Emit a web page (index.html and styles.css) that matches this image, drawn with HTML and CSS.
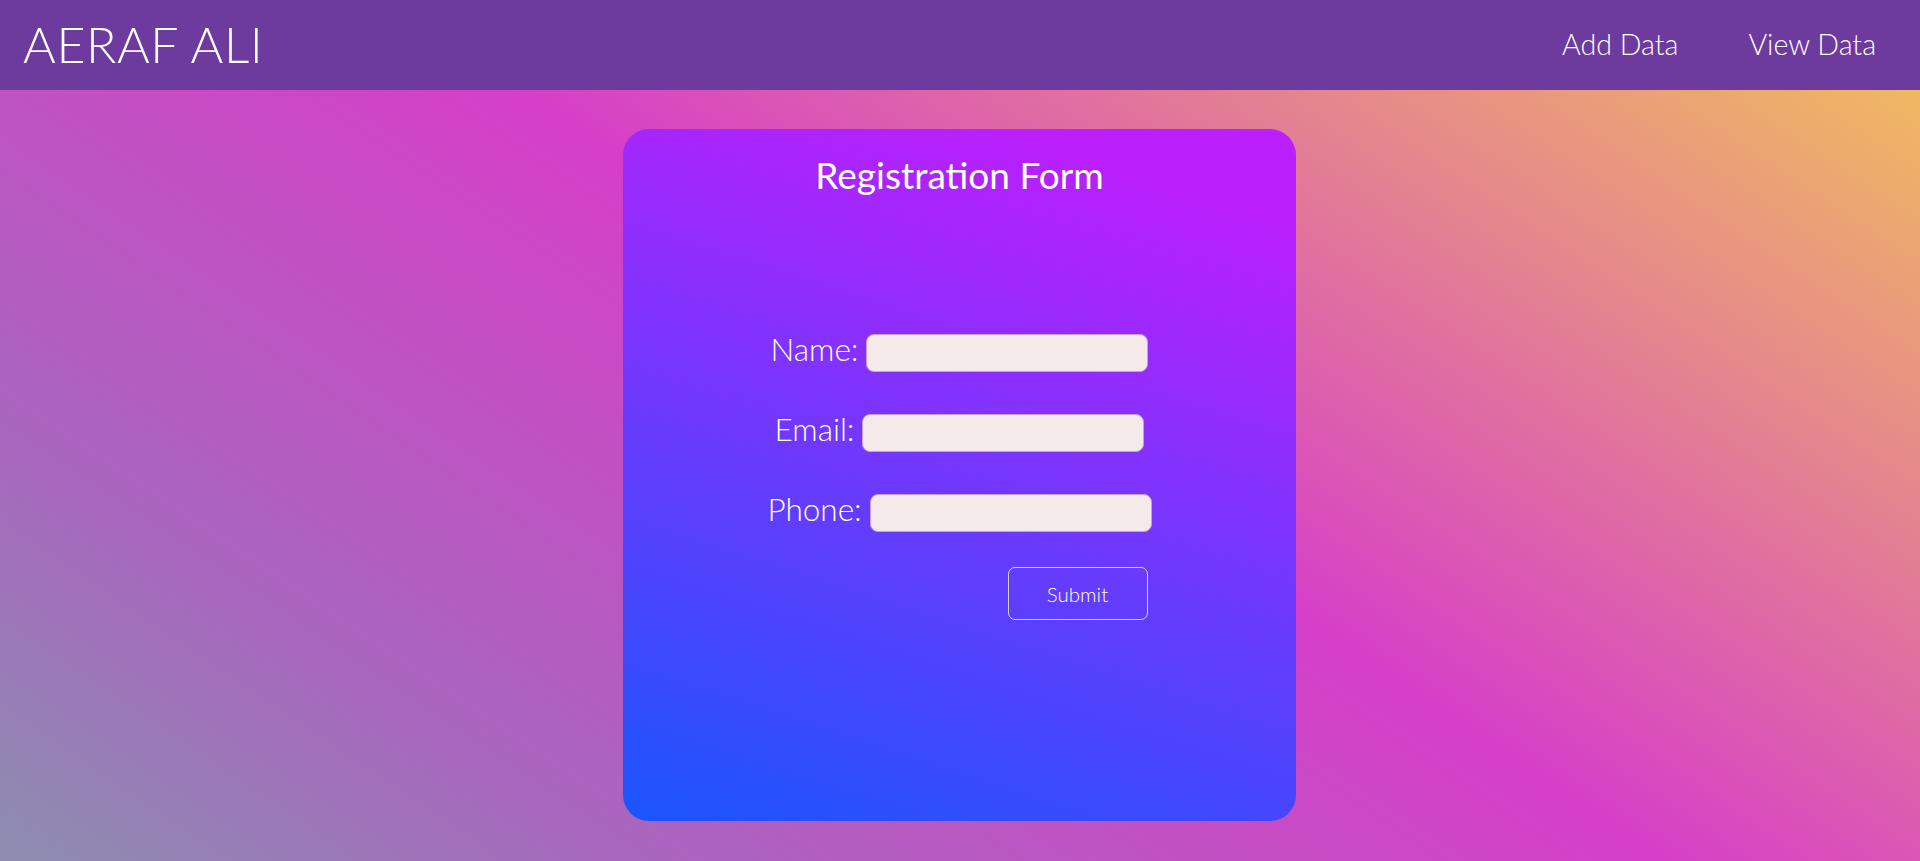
FILE: index.html
```html
<!DOCTYPE html>
<html lang="en">
<head>
<meta charset="utf-8">
<title>Registration</title>
<link rel="stylesheet" href="styles.css">
</head>
<body>
<header class="topbar">
  <div class="brand">AERAF ALI</div>
  <nav class="nav">
    <a class="nav-link" href="#">Add Data</a>
    <a class="nav-link" href="#">View Data</a>
  </nav>
</header>
<main class="page">
  <section class="card">
    <h2 class="card-title">Registration Form</h2>
    <form class="form">
      <div class="row"><label class="label">Name:</label><input class="field" type="text"></div>
      <div class="row"><label class="label">Email:</label><input class="field" type="text"></div>
      <div class="row"><label class="label">Phone:</label><input class="field" type="text"></div>
      <div class="actions"><button class="submit" type="button">Submit</button></div>
    </form>
  </section>
</main>
</body>
</html>
```
FILE: styles.css
```css
* { box-sizing: border-box; }
html, body { margin: 0; padding: 0; }
body {
  height: 861px;
  overflow: hidden;
  font-family: "Lato", "Inter", sans-serif;
  color: #fff;
  background: linear-gradient(34deg, #8c8eb0 0%, #a866be 20%, #d63fc8 52%, #e58a8a 78%, #f3c358 100%);
}
.topbar {
  height: 90px;
  background: #6d3a9e;
  display: flex;
  align-items: center;
  justify-content: space-between;
  padding: 0 44px 0 23px;
}
.brand {
  font-size: 50px;
  font-weight: 300;
  letter-spacing: 0.6px;
  padding-bottom: 2px;
}
.nav { display: flex; gap: 70px; }
.nav-link {
  color: #fff;
  text-decoration: none;
  font-size: 28.6px;
  font-weight: 300;
  padding-bottom: 2px;
}
.page {
  display: flex;
  justify-content: center;
  padding-top: 39px;
}
.card {
  width: 673px;
  height: 692px;
  margin-left: -1px;
  border-radius: 26px;
  background: linear-gradient(18deg, #1a55fc 0%, #6a3afc 45%, #9d29fc 72%, #bb1ffc 90%);
  display: flex;
  flex-direction: column;
  align-items: center;
}
.card-title {
  margin: 22px 0 0;
  font-size: 37px;
  font-weight: 400;
  line-height: 48px;
}
.form {
  margin-top: 135px;
  display: flex;
  flex-direction: column;
  align-items: center;
}
.row {
  display: flex;
  align-items: center;
  gap: 8px;
  height: 38px;
  margin-bottom: 42px;
}
.label {
  font-size: 31.5px;
  font-weight: 300;
  margin-bottom: 8px;
}
.field {
  width: 282px;
  height: 38px;
  border: 1px solid #c79ee8;
  border-radius: 8px;
  background: #f4eae9;
  outline: none;
}
.actions {
  width: 378px;
  display: flex;
  justify-content: flex-end;
  margin-top: -7px;
}
.submit {
  width: 140px;
  height: 53px;
  margin-right: 1px;
  background: transparent;
  border: 1px solid rgba(255,255,255,0.75);
  border-radius: 7px;
  color: #fff;
  font-family: "Lato", "Inter", sans-serif;
  font-size: 20.5px;
  font-weight: 300;
}
```
